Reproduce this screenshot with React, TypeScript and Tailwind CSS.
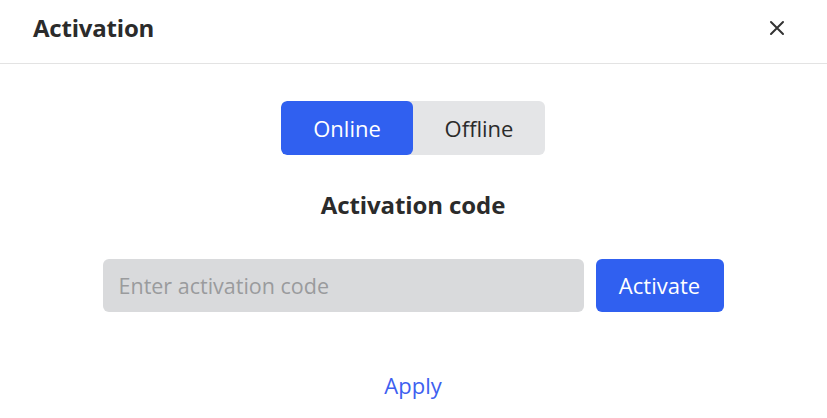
import React, { useState } from 'react';

const App: React.FC = () => {
  const [mode, setMode] = useState<'online' | 'offline'>('online');
  const [code, setCode] = useState('');

  return (
    <div className="w-[827px] h-[418px] bg-white text-[#2b2b2b] font-['Open_Sans',sans-serif] overflow-hidden">
      {/* Header */}
      <div className="h-[64px] flex items-center justify-between pl-[33px] pr-[42px] border-b border-[#e3e3e3]">
        <h1 className="text-[24px] font-bold tracking-[-0.2px] leading-[32px] mt-[-7px]">Activation</h1>
        <button className="w-4 h-4 flex items-center justify-center text-[#333] mt-[-7px]">
          <svg width="16" height="16" viewBox="0 0 16 16" fill="none" stroke="currentColor" strokeWidth="2" strokeLinecap="round">
            <path d="M2 2L14 14M14 2L2 14" />
          </svg>
        </button>
      </div>

      {/* Body */}
      <div className="flex flex-col items-center pt-[37px] pr-px">
        <div className="flex rounded-[6px] bg-[#e4e5e7] overflow-hidden">
          <button
            onClick={() => setMode('online')}
            className={`w-[132px] h-[54px] rounded-[6px] text-[22px] ${
              mode === 'online' ? 'bg-[#3060f0] text-white' : 'text-[#2b2b2b]'
            }`}
          >
            Online
          </button>
          <button
            onClick={() => setMode('offline')}
            className={`w-[132px] h-[54px] rounded-[6px] text-[22px] ${
              mode === 'offline' ? 'bg-[#3060f0] text-white' : 'text-[#2b2b2b]'
            }`}
          >
            Offline
          </button>
        </div>

        <h2 className="mt-[34px] text-[24px] font-bold tracking-[-0.1px] leading-[32px]">Activation code</h2>

        <div className="mt-[38px] flex gap-3">
          <input
            value={code}
            onChange={(e) => setCode(e.target.value)}
            placeholder="Enter activation code"
            className="w-[481px] h-[53px] rounded-[6px] bg-[#d9dadc] px-4 text-[21.5px] outline-none placeholder:text-[#9a9b9d]"
          />
          <button className="w-[128px] h-[53px] rounded-[6px] bg-[#3060f0] text-white text-[22px]">Activate</button>
        </div>

        <button className="mt-[57px] text-[22px] leading-[33px] text-[#3e5ff0]">Apply</button>
      </div>
    </div>
  );
};

export default App;
